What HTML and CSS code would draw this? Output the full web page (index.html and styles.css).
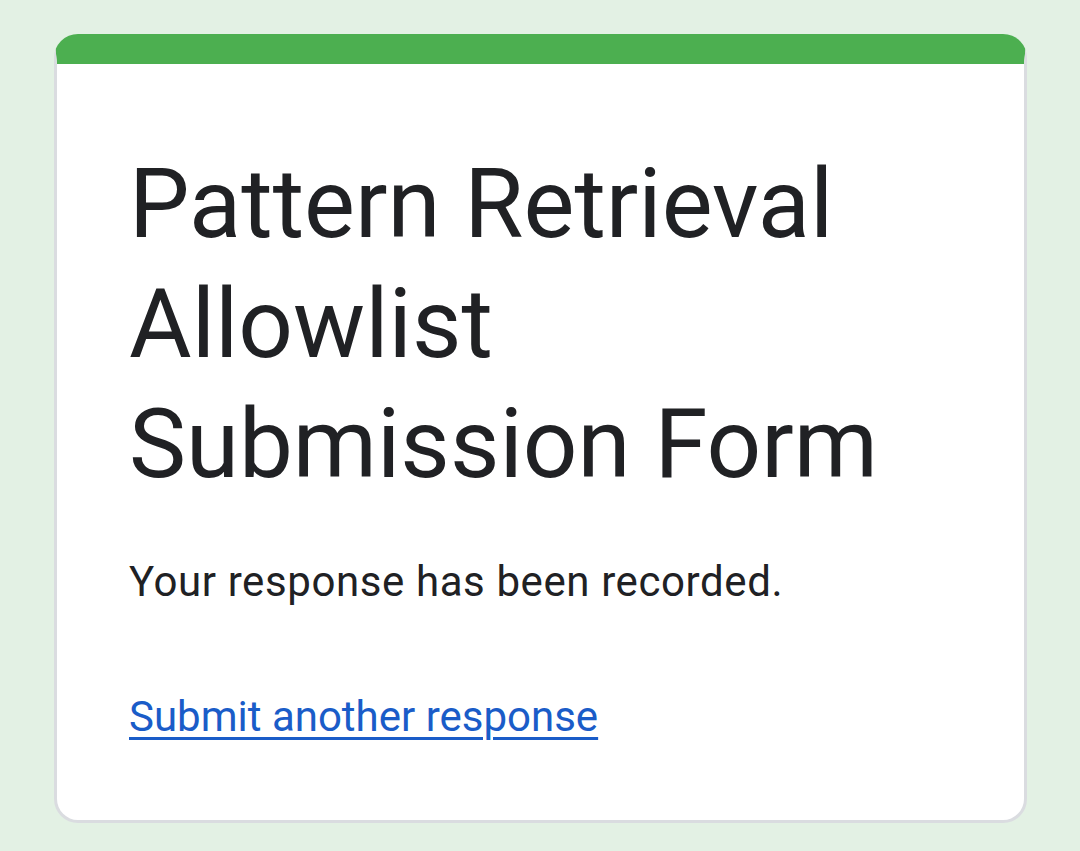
FILE: index.html
```html
<!DOCTYPE html>
<html lang="en">
<head>
<meta charset="utf-8">
<title>Pattern Retrieval Allowlist Submission Form</title>
<link rel="stylesheet" href="styles.css">
</head>
<body>
<main class="page">
  <section class="card">
    <div class="card-body">
      <h1 class="title">Pattern Retrieval Allowlist Submission Form</h1>
      <p class="message">Your response has been recorded.</p>
      <a class="link" href="#">Submit another response</a>
    </div>
  </section>
</main>
</body>
</html>
```

FILE: styles.css
```css
html, body {
  margin: 0;
  padding: 0;
}
body {
  background: #e3f1e4;
  font-family: Roboto, "Liberation Sans", Arial, sans-serif;
  color: #202124;
}
.page {
  padding: 34px 53px 30px 54px;
}
.card {
  background: #fff;
  border-radius: 24px;
  border: 3px solid #dadce0;
  border-top: 30px solid #4caf50;
}
.card-body {
  padding: 80px 72px 73px 72px;
}
.title {
  margin: 0;
  font-weight: 400;
  font-size: 96px;
  line-height: 120px;
  width: 780px;
}
.message {
  margin: 48px 0 0 0;
  font-size: 42px;
  line-height: 60px;
  letter-spacing: 0.6px;
}
.link {
  display: inline-block;
  margin-top: 75px;
  font-size: 42px;
  line-height: 60px;
  color: #1a5cc8;
  text-decoration: underline;
  text-decoration-thickness: 3px;
  text-underline-offset: 6px;
}
```
